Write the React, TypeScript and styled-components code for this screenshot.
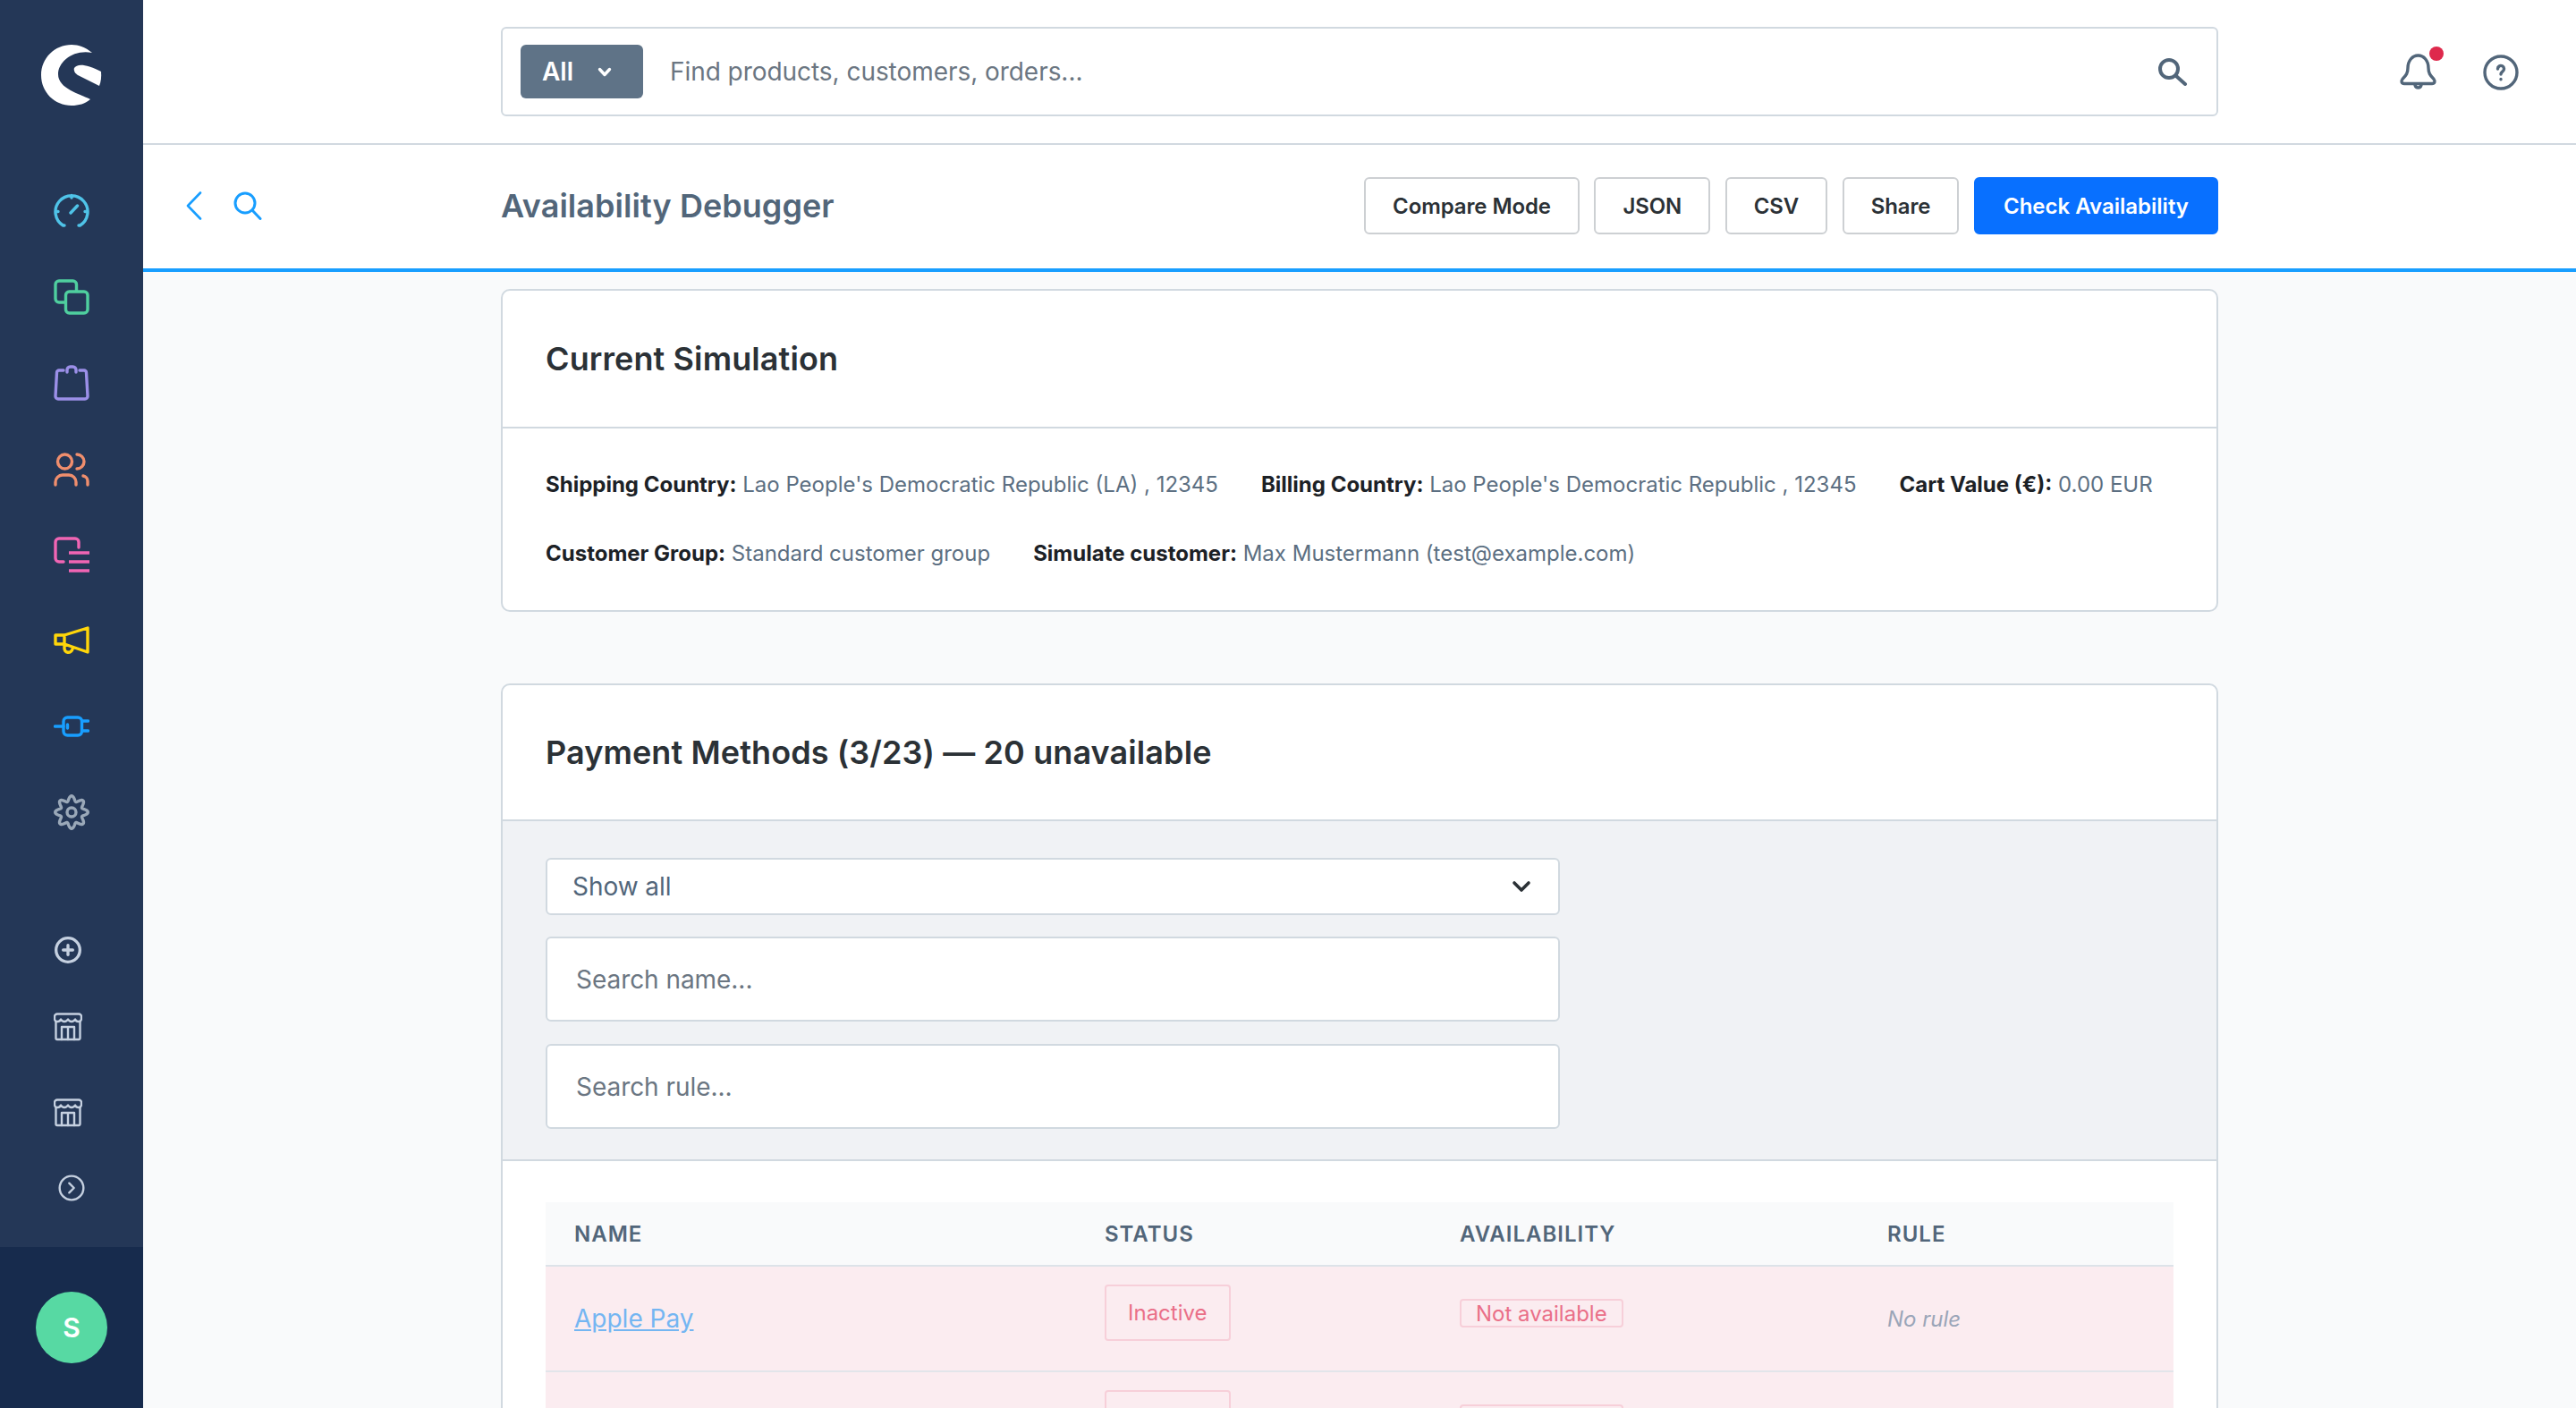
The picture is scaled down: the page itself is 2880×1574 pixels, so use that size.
import React from "react";
import styled, { createGlobalStyle } from "styled-components";
import { CirclePlus, CircleChevronRight } from "lucide-react";

const Global = createGlobalStyle`
  html, body { margin: 0; padding: 0; height: 100%; overflow: hidden; background: #f9fafb; }
  * { box-sizing: border-box; }
  body { font-family: Inter, "Liberation Sans", sans-serif; color: #2b3136; }
`;

const Shell = styled.div`
  display: flex;
  width: 2880px;
  height: 1574px;
  overflow: hidden;
`;
const Sidebar = styled.aside`
  width: 160px;
  flex: none;
  display: flex;
  flex-direction: column;
  background: #243757;
`;
const LogoWrap = styled.div`
  height: 168px;
  padding: 50px 0 0 46px;
  flex: none;
`;
const MainNav = styled.nav`
  display: flex;
  flex-direction: column;
  align-items: center;
  gap: 56px;
  padding-top: 48px;
`;
const NavIcon = styled.svg<{ $c: string }>`
  width: 40px;
  height: 40px;
  display: block;
  fill: none;
  stroke: ${(p) => p.$c};
  stroke-width: 3.4;
  stroke-linecap: round;
  stroke-linejoin: round;
`;
const LowerNav = styled.nav`
  display: flex;
  flex-direction: column;
  padding: 118px 0 0 60px;
  color: #c5d0e0;
  flex: 1;
`;
const LowerIcon = styled.div<{ $gap: number; $shift?: number }>`
  height: 32px;
  margin-bottom: ${(p) => p.$gap}px;
  margin-left: ${(p) => p.$shift || 0}px;
  svg { display: block; }
`;
const UserBar = styled.div`
  height: 180px;
  flex: none;
  background: #172b4d;
  display: flex;
  align-items: center;
  justify-content: center;
`;
const Avatar = styled.div`
  width: 80px;
  height: 80px;
  border-radius: 50%;
  background: #57d9a3;
  color: #fff;
  font-size: 30px;
  font-weight: 600;
  display: flex;
  align-items: center;
  justify-content: center;
`;

const Main = styled.main`
  flex: 1;
  min-width: 0;
  display: flex;
  flex-direction: column;
`;
const TopBar = styled.header`
  height: 162px;
  flex: none;
  background: #fff;
  border-bottom: 2px solid #d1d9e0;
  display: grid;
  grid-template-columns: 400px 1920px 400px;
  align-items: center;
`;
const SearchBox = styled.div`
  grid-column: 2;
  height: 100px;
  border: 2px solid #d1d9e0;
  border-radius: 6px;
  display: flex;
  align-items: center;
  padding: 0 32px 0 20px;
  background: #fff;
`;
const ScopeBtn = styled.div`
  width: 137px;
  height: 60px;
  border-radius: 6px;
  background: #5f7387;
  color: #fff;
  font-size: 28px;
  font-weight: 600;
  display: flex;
  align-items: center;
  padding-left: 24px;
  gap: 27px;
  flex: none;
`;
const SearchText = styled.div`
  flex: 1;
  margin-left: 30px;
  font-size: 28px;
  letter-spacing: -0.05px;
  color: #6b7682;
`;
const TopActions = styled.div`
  display: flex;
  align-items: center;
  padding: 2px 0 0 202px;
  gap: 51px;
`;
const BellWrap = styled.div`
  position: relative;
  width: 43px;
  height: 42px;
`;
const Dot = styled.span`
  position: absolute;
  right: -7px;
  top: -8px;
  width: 16px;
  height: 16px;
  border-radius: 50%;
  background: #de294c;
`;
const SmartBar = styled.div`
  height: 142px;
  flex: none;
  background: #fff;
  border-bottom: 4px solid #189eff;
  padding-bottom: 2px;
  display: grid;
  grid-template-columns: 400px 1920px 400px;
  align-items: center;
`;
const BackTools = styled.div`
  display: flex;
  align-items: center;
  gap: 34px;
  padding-left: 48px;
  color: #189eff;
  svg { display: block; }
`;
const SmartInner = styled.div`
  display: flex;
  align-items: center;
  justify-content: space-between;
`;
const PageTitle = styled.h1`
  margin: 0;
  font-size: 36px;
  font-weight: 600;
  letter-spacing: 0.05px;
  color: #52667a;
`;
const Actions = styled.div`
  display: flex;
  gap: 16.5px;
`;
const Btn = styled.button<{ $primary?: boolean }>`
  height: 64px;
  padding: 0 ${(p) => (p.$primary ? 31 : 30)}px;
  border-radius: 6px;
  font-family: inherit;
  font-size: 24px;
  font-weight: 600;
  letter-spacing: ${(p) => (p.$primary ? 0 : -0.1)}px;
  border: 2px solid ${(p) => (p.$primary ? "#0870ff" : "#cdd0d3")};
  background: ${(p) => (p.$primary ? "#0870ff" : "#fff")};
  color: ${(p) => (p.$primary ? "#fff" : "#2b3136")};
`;
const Content = styled.div`
  width: 1920px;
  margin: 0 auto;
  padding-top: 19px;
  display: flex;
  flex-direction: column;
  gap: 80px;
`;
const Card = styled.section`
  background: #fff;
  border: 2px solid #d1d9e0;
  border-radius: 10px;
`;
const CardHeader = styled.div<{ $h: number }>`
  height: ${(p) => p.$h}px;
  display: flex;
  align-items: center;
  padding: 0 48px;
  border-bottom: 2px solid #d1d9e0;
`;
const CardTitle = styled.h2`
  margin: 0;
  font-size: 36px;
  font-weight: 600;
  letter-spacing: 0.1px;
  color: #2b3136;
`;
const SimBody = styled.div`
  padding: 47px 48px 48px;
  display: flex;
  flex-wrap: wrap;
  gap: 46px 48px;
  font-size: 24px;
  line-height: 31px;
  color: #5c6f82;
`;
const SimItem = styled.div`
  b { font-weight: 700; color: #1c2126; }
`;
const FilterPanel = styled.div`
  background: #f0f2f5;
  border-bottom: 2px solid #d1d9e0;
  padding: 41px 48px 34px;
  display: flex;
  flex-direction: column;
  align-items: flex-start;
`;
const SelectBox = styled.div`
  width: 1134px;
  height: 64px;
  background: #fff;
  border: 2px solid #d1d9e0;
  border-radius: 6px;
  display: flex;
  align-items: center;
  justify-content: space-between;
  padding: 0 30px 0 28px;
  font-size: 28px;
  letter-spacing: -0.05px;
  color: #52667a;
  margin-bottom: 24px;
`;
const SearchInput = styled.div<{ $mb?: number }>`
  width: 1134px;
  height: 95px;
  background: #fff;
  border: 2px solid #d1d9e0;
  border-radius: 6px;
  display: flex;
  align-items: center;
  padding: 0 32px;
  font-size: 28px;
  letter-spacing: -0.05px;
  color: #6b7682;
  margin-bottom: ${(p) => p.$mb || 0}px;
`;
const TableWrap = styled.div`
  padding: 46px 48px 0;
`;
const Table = styled.table`
  width: 1820px;
  table-layout: fixed;
  border-collapse: collapse;
`;
const HeadCell = styled.th`
  height: 71px;
  background: #f9fafb;
  border-bottom: 2px solid #dde3e9;
  text-align: left;
  padding: 0 0 0 32px;
  font-size: 24px;
  font-weight: 600;
  letter-spacing: 1px;
  text-transform: uppercase;
  color: #52667a;
`;
const Row = styled.tr`
  height: 118px;
  background: #fbecf0;
  border-bottom: 2px solid #e2e5ea;
`;
const Cell = styled.td<{ $pt?: number }>`
  padding: ${(p) => (p.$pt !== undefined ? `${p.$pt}px 0 0 32px` : "0 0 0 32px")};
  vertical-align: ${(p) => (p.$pt !== undefined ? "top" : "middle")};
`;
const NameLink = styled.a`
  font-size: 28px;
  color: #74b6f2;
  text-decoration: underline;
`;
const StatusBadge = styled.span`
  display: inline-flex;
  align-items: center;
  height: 63px;
  padding: 0 24px;
  border: 2px solid #f7cfd9;
  border-radius: 4px;
  font-size: 24px;
  color: #ea6f88;
`;
const AvailBadge = styled.span`
  display: inline-flex;
  align-items: center;
  height: 32px;
  padding: 0 16px;
  border: 2px solid #f7cfd9;
  border-radius: 4px;
  font-size: 24px;
  color: #ea6f88;
`;
const NoRule = styled.em`
  font-size: 24px;
  color: #9aa5b8;
`;

const Logo = () => (
  <svg width="68" height="68" viewBox="0 0 68 68" style={{ display: "block" }} fill="#fff">
    <path d="M57 9C50 3 42 0 34 0 15 0 0 15 0 34s15 34 34 34c8 0 15-2 21-7-12-6-36-12-36-28C19 19 36 5 57 9Z" />
    <path d="M37 26C40 21 50 21 67 30c.5 6 0 11-2 16L41 34c-3-2-5-5-4-8Z" />
  </svg>
);

const StoreIcon = () => (
  <svg width="32" height="32" viewBox="0 0 32 32" fill="none" stroke="currentColor" strokeWidth="2.4" strokeLinecap="round" strokeLinejoin="round">
    <path d="M4 1.500h24a3 3 0 0 1 3 3V7a3 3 0 0 1-3 3 4 4 0 0 1-4-2.500 4.500 4.500 0 0 1-8 0 4.500 4.500 0 0 1-8 0A4 4 0 0 1 4 10a3 3 0 0 1-3-3V4.500a3 3 0 0 1 3-3Z" />
    <path d="M2.500 10v18.500a1.500 1.500 0 0 0 1.500 1.500h24a1.500 1.500 0 0 0 1.500-1.500V10" />
    <path d="M9 30V16h14v14M16 16v14" />
  </svg>
);

const gearPath = (() => {
  const pts: string[] = [];
  for (let i = 0; i < 160; i++) {
    const t = (i / 160) * Math.PI * 2;
    const r = 15.4 + 2.9 * Math.cos(8 * t);
    const x = 20 + r * Math.sin(t);
    const y = 20 - r * Math.cos(t);
    pts.push(`${i ? "L" : "M"}${x.toFixed(2)} ${y.toFixed(2)}`);
  }
  return pts.join("") + "Z";
})();

const simOne: [string, string][] = [
  ["Shipping Country:", "Lao People's Democratic Republic (LA) , 12345"],
  ["Billing Country:", "Lao People's Democratic Republic , 12345"],
  ["Cart Value (€):", "0.00 EUR"],
  ["Customer Group:", "Standard customer group"],
  ["Simulate customer:", "Max Mustermann (test@example.com)"],
];

const rows = [
  { id: 1, name: "Apple Pay", rule: "No rule" },
  { id: 2, name: "", rule: "" },
];

export default function App() {
  return (
    <Shell>
      <Global />
      <Sidebar>
        <LogoWrap>
          <Logo />
        </LogoWrap>
        <MainNav>
          <NavIcon $c="#4fc3e8" viewBox="0 0 40 40">
            <path d="M12 36H10.500A18 18 0 1 1 29.500 36H28M20 2.500v2.500M2.500 20.500H5M37.500 20.500H35M19 22l7.500-8" />
          </NavIcon>
          <NavIcon $c="#4fcf9f" viewBox="0 0 40 40">
            <path d="M12 26H6a4 4 0 0 1-4-4V6a4 4 0 0 1 4-4h15.500a4 4 0 0 1 4 4v7" />
            <rect x="13.500" y="14" width="24.500" height="24" rx="4" />
          </NavIcon>
          <NavIcon $c="#9b8fe8" viewBox="0 0 40 40">
            <path d="M11 6H6a2.500 2.500 0 0 0-2.500 2.500L2 35a3 3 0 0 0 3 3h30a3 3 0 0 0 3-3L36.500 8.500A2.500 2.500 0 0 0 34 6h-5" />
            <path d="M15 8V5.500A3.500 3.500 0 0 1 18.500 2h3A3.500 3.500 0 0 1 25 5.500V8" />
          </NavIcon>
          <NavIcon $c="#f08e6d" viewBox="0 0 40 40">
            <circle cx="12.500" cy="12" r="8" />
            <path d="M2 38v-3a8 8 0 0 1 8-8h7a8 8 0 0 1 8 8v3M26 4a8 8 0 0 1 0 16M33 28a6 6 0 0 1 5 6v4" />
          </NavIcon>
          <NavIcon $c="#f065b4" viewBox="0 0 40 40">
            <path d="M11 28H6a4 4 0 0 1-4-4V6a4 4 0 0 1 4-4h18a4 4 0 0 1 4 4v6" />
            <path strokeLinecap="butt" d="M17 18h23M17 28h23M17 38h23" />
          </NavIcon>
          <NavIcon $c="#ffd60a" viewBox="0 0 40 40">
            <path d="M12 14 38 6v27l-26-9ZM12 14H2v10h10ZM12 25v3a4.500 4.500 0 0 0 9 1.500" />
          </NavIcon>
          <NavIcon $c="#189eff" viewBox="0 0 40 40">
            <rect x="11" y="10" width="20.500" height="20" rx="4.500" />
            <path d="M1.500 20H11M31.500 14H38.500M31.500 25H38.500M15.500 18v4" />
          </NavIcon>
          <NavIcon $c="#9aa8b8" viewBox="0 0 40 40">
            <path d={gearPath} />
            <circle cx="20" cy="20" r="5" />
          </NavIcon>
        </MainNav>
        <LowerNav>
          <LowerIcon $gap={54}>
            <CirclePlus size={32} strokeWidth={2.5} />
          </LowerIcon>
          <LowerIcon $gap={64}>
            <StoreIcon />
          </LowerIcon>
          <LowerIcon $gap={52}>
            <StoreIcon />
          </LowerIcon>
          <LowerIcon $gap={0} $shift={4}>
            <CircleChevronRight size={32} strokeWidth={1.8} />
          </LowerIcon>
        </LowerNav>
        <UserBar>
          <Avatar>S</Avatar>
        </UserBar>
      </Sidebar>
      <Main>
        <TopBar>
          <SearchBox>
            <ScopeBtn>
              All
              <svg width="16" height="11" viewBox="0 0 16 11" fill="none" stroke="#fff" strokeWidth="3.400" strokeLinecap="round" strokeLinejoin="round">
                <path d="M2.500 2.500 8 8.500l5.500-6" />
              </svg>
            </ScopeBtn>
            <SearchText>Find products, customers, orders...</SearchText>
            <svg width="34" height="32" viewBox="0 0 34 32" fill="none" stroke="#52667a" strokeWidth="4" strokeLinecap="round">
              <circle cx="13" cy="13" r="10" />
              <path d="M21 21l10 9" />
            </svg>
          </SearchBox>
          <TopActions>
            <BellWrap>
              <svg width="43" height="42" viewBox="0 0 43 42" fill="none" stroke="#52667a" strokeWidth="3.400" strokeLinecap="round" strokeLinejoin="round">
                <path d="M10 16C10 8 15 2 21.500 2S33 8 33 16c0 6 2 8 6 12.500 2 2.500 1 5-2 5H6c-3 0-4-2.500-2-5 4-4.500 6-6.500 6-12.500Z" />
                <path d="M18 35c1 4 6 4 7 0" />
              </svg>
              <Dot />
            </BellWrap>
            <svg width="40" height="40" viewBox="0 0 40 40" fill="none" stroke="#52667a" strokeWidth="3.400" strokeLinecap="round">
              <circle cx="20" cy="20" r="18" />
              <path d="M16.500 16a3.500 3.500 0 1 1 5.500 2.800c-1.300 1-2 1.500-2 3.200M20 27.500v.3" />
            </svg>
          </TopActions>
        </TopBar>
        <SmartBar>
          <BackTools>
            <svg width="18" height="32" viewBox="0 0 18 32" fill="none" stroke="currentColor" strokeWidth="2.600" strokeLinecap="round" strokeLinejoin="round">
              <path d="M16 1.500 2 16l14 14.500" />
            </svg>
            <svg width="33" height="32" viewBox="0 0 33 32" fill="none" stroke="currentColor" strokeWidth="3" strokeLinecap="round">
              <circle cx="14" cy="13" r="11" />
              <path d="M22 21l9 9.500" />
            </svg>
          </BackTools>
          <SmartInner>
            <PageTitle>Availability Debugger</PageTitle>
            <Actions>
              <Btn>Compare Mode</Btn>
              <Btn>JSON</Btn>
              <Btn>CSV</Btn>
              <Btn>Share</Btn>
              <Btn $primary>Check Availability</Btn>
            </Actions>
          </SmartInner>
        </SmartBar>
        <Content>
          <Card>
            <CardHeader $h={154}>
              <CardTitle>Current Simulation</CardTitle>
            </CardHeader>
            <SimBody>
              {simOne.map(([k, v]) => (
                <SimItem key={k}>
                  <b>{k}</b> {v}
                </SimItem>
              ))}
            </SimBody>
          </Card>
          <Card>
            <CardHeader $h={152}>
              <CardTitle>Payment Methods (3/23) — 20 unavailable</CardTitle>
            </CardHeader>
            <FilterPanel>
              <SelectBox>
                Show all
                <svg width="22" height="14" viewBox="0 0 22 14" fill="none" stroke="#2b3136" strokeWidth="3.600" strokeLinecap="round" strokeLinejoin="round">
                  <path d="M3 3l8 8 8-8" />
                </svg>
              </SelectBox>
              <SearchInput $mb={25}>Search name...</SearchInput>
              <SearchInput>Search rule...</SearchInput>
            </FilterPanel>
            <TableWrap>
              <Table>
                <colgroup>
                  <col width="593" />
                  <col width="397" />
                  <col width="478" />
                  <col width="352" />
                </colgroup>
                <thead>
                  <tr>
                    <HeadCell>Name</HeadCell>
                    <HeadCell>Status</HeadCell>
                    <HeadCell>Availability</HeadCell>
                    <HeadCell>Rule</HeadCell>
                  </tr>
                </thead>
                <tbody>
                  {rows.map((r) => (
                    <Row key={r.id}>
                      <Cell>
                        <NameLink href="#">{r.name}</NameLink>
                      </Cell>
                      <Cell $pt={20}>
                        <StatusBadge>Inactive</StatusBadge>
                      </Cell>
                      <Cell $pt={36}>
                        <AvailBadge>Not available</AvailBadge>
                      </Cell>
                      <Cell>
                        <NoRule>{r.rule}</NoRule>
                      </Cell>
                    </Row>
                  ))}
                </tbody>
              </Table>
            </TableWrap>
          </Card>
        </Content>
      </Main>
    </Shell>
  );
}
